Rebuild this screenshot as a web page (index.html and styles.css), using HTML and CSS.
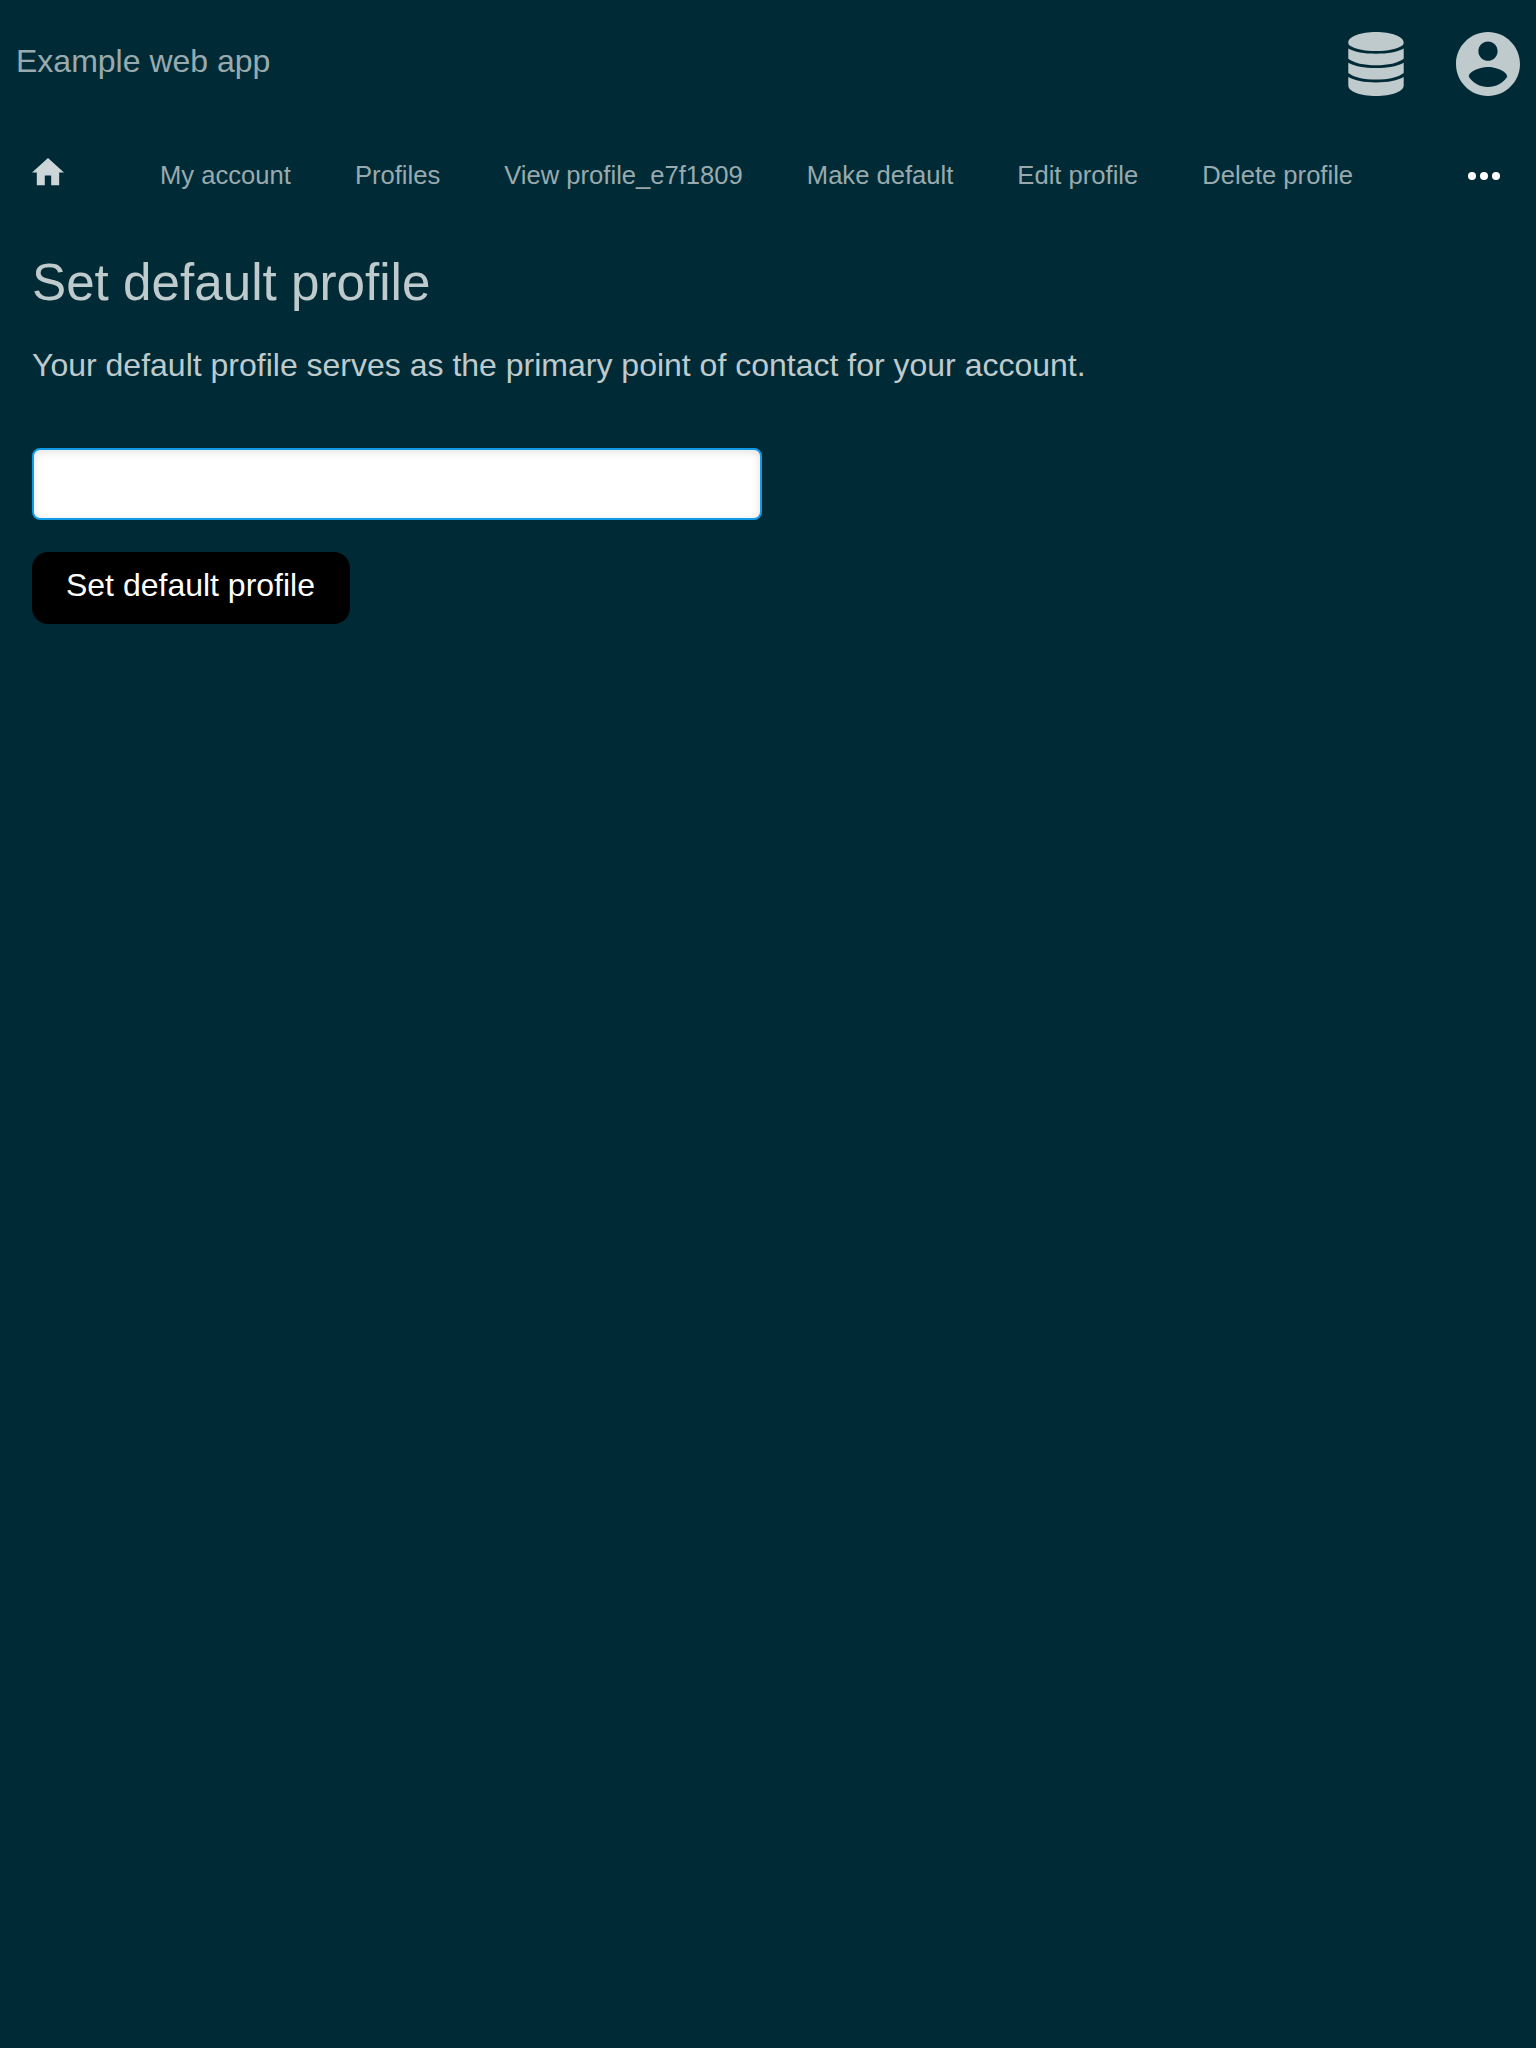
FILE: index.html
```html
<!DOCTYPE html>
<html lang="en">
<head>
<meta charset="utf-8">
<title>Set default profile</title>
<link rel="stylesheet" href="styles.css">
</head>
<body>
<header class="topbar">
  <a class="brand">Example web app</a>
  <div class="topbar-icons">
    <svg class="icon-database" viewBox="0 0 56 64"><path d="M28 0C43 0 55.700 4.500 55.700 10.500C55.700 11.500 55.500 12.300 55 13C49 17 40 19 28 19S7 17 1 13C.5 12.300.3 11.500.3 10.500C.3 4.500 13 0 28 0ZM.3 16.500C6.500 20 16 21.700 28 21.700S49.500 20 55.700 16.500V26.700C50 31.100 40 33.200 28 33.200S6 31.100.3 26.700ZM.3 30.700C6.500 34.200 16 36 28 36S49.500 34.200 55.700 30.700V41C50 45.400 40 47.600 28 47.600S6 45.400.3 41ZM.3 45C6.500 48.600 16 50.400 28 50.400S49.500 48.600 55.700 45V53.500C55.700 59.500 43.500 64 28 64S.3 59.500.3 53.500Z"/></svg>
    <svg class="icon-account" viewBox="2 2 20 20"><path d="M12 2C6.480 2 2 6.480 2 12s4.480 10 10 10 10-4.480 10-10S17.520 2 12 2zm0 3c1.660 0 3 1.340 3 3s-1.340 3-3 3-3-1.340-3-3 1.340-3 3-3zm0 14.200c-2.500 0-4.710-1.280-6-3.220.03-1.990 4-3.080 6-3.080 1.990 0 5.970 1.090 6 3.080-1.290 1.940-3.500 3.220-6 3.220z"/></svg>
  </div>
</header>
<nav class="nav">
  <svg class="icon-home" viewBox="2 3 20 17"><path d="M10 20v-6h4v6h5v-8h3L12 3 2 12h3v8z"/></svg>
  <a>My account</a>
  <a>Profiles</a>
  <a>View profile_e7f1809</a>
  <a>Make default</a>
  <a>Edit profile</a>
  <a>Delete profile</a>
  <svg class="icon-more" viewBox="0 0 32 8"><circle cx="4" cy="4" r="4"/><circle cx="16" cy="4" r="4"/><circle cx="28" cy="4" r="4"/></svg>
</nav>
<main class="content">
  <h1>Set default profile</h1>
  <p>Your default profile serves as the primary point of contact for your account.</p>
  <form>
    <input class="field" type="text" aria-label="Profile">
    <button class="submit" type="button">Set default profile</button>
  </form>
</main>
</body>
</html>
```
FILE: styles.css
```css
* { box-sizing: border-box; }
body {
  margin: 0;
  min-height: 2048px;
  background: #002b36;
  color: #bfcacd;
  font: 32px/40px "Liberation Sans", Arial, sans-serif;
}
.topbar {
  display: flex;
  justify-content: space-between;
  height: 128px;
  padding: 32px 16px;
}
.brand { margin-top: 9px; line-height: 40px; color: #99aaaf; }
.topbar-icons { display: flex; gap: 52px; fill: #bfcacd; }
.icon-database { width: 56px; height: 64px; }
.icon-account { width: 64px; height: 64px; }
.nav {
  display: flex;
  align-items: center;
  gap: 64px;
  height: 96px;
  padding: 0 36px 0 32px;
  font-size: 25.6px;
  line-height: 32px;
  color: #99aaaf;
}
.nav a { margin-bottom: 2px; white-space: nowrap; }
.icon-home { width: 32px; height: 27.2px; margin: 0 32px 8px 0; fill: #ccd5d7; }
.icon-more { width: 32px; height: 8px; margin-left: auto; fill: #fff; }
.content { padding: 27px 32px; }
h1 { margin: 0; font-size: 51.2px; font-weight: 400; line-height: 64px; }
p { margin: 30px 0 0; }
form {
  display: flex;
  flex-direction: column;
  align-items: flex-start;
  gap: 32px;
  margin-top: 63px;
}
.field {
  width: 730px;
  height: 72px;
  border: 2px solid #109be6;
  border-radius: 8px;
  background: #fff;
  box-shadow: inset 0 2px 8px rgba(0, 0, 0, .12);
}
.submit {
  width: 318px;
  height: 72px;
  padding: 0 1px 6px 0;
  border: 0;
  border-radius: 16px;
  background: #000;
  color: #fff;
  font: inherit;
}
```
